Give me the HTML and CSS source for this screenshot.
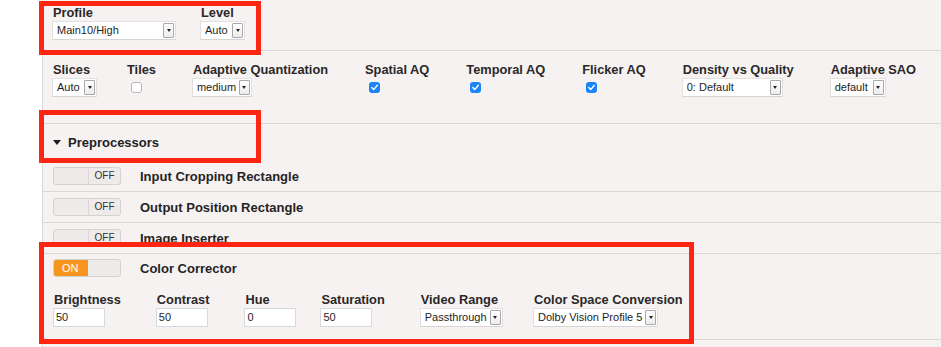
FILE: index.html
```html
<!DOCTYPE html>
<html>
<head>
<meta charset="utf-8">
<link rel="stylesheet" href="styles.css">
</head>
<body>
<div class="page">
  <div class="gutter"></div>
  <div class="panel">
    <section class="sect sect-top">
      <div class="fields">
        <div class="field">
          <div class="label">Profile</div>
          <div class="select w124"><span class="val">Main10/High</span><span class="btn"><i></i></span></div>
        </div>
        <div class="field">
          <div class="label">Level</div>
          <div class="select w45"><span class="val">Auto</span><span class="btn"><i></i></span></div>
        </div>
      </div>
    </section>

    <section class="sect sect-enc">
      <div class="fields">
        <div class="field">
          <div class="label">Slices</div>
          <div class="select w45"><span class="val">Auto</span><span class="btn"><i></i></span></div>
        </div>
        <div class="field">
          <div class="label">Tiles</div>
          <div class="ctl-check"><span class="cb"></span></div>
        </div>
        <div class="field">
          <div class="label">Adaptive Quantization</div>
          <div class="select w60"><span class="val">medium</span><span class="btn"><i></i></span></div>
        </div>
        <div class="field">
          <div class="label">Spatial AQ</div>
          <div class="ctl-check"><span class="cb on"><svg viewBox="0 0 11 11" width="11" height="11"><path d="M2.8 5.6 L4.7 7.6 L8.3 3.3" fill="none" stroke="#fff" stroke-width="1.4" stroke-linecap="round" stroke-linejoin="round"/></svg></span></div>
        </div>
        <div class="field">
          <div class="label">Temporal AQ</div>
          <div class="ctl-check"><span class="cb on"><svg viewBox="0 0 11 11" width="11" height="11"><path d="M2.8 5.6 L4.7 7.6 L8.3 3.3" fill="none" stroke="#fff" stroke-width="1.4" stroke-linecap="round" stroke-linejoin="round"/></svg></span></div>
        </div>
        <div class="field">
          <div class="label">Flicker AQ</div>
          <div class="ctl-check"><span class="cb on"><svg viewBox="0 0 11 11" width="11" height="11"><path d="M2.8 5.6 L4.7 7.6 L8.3 3.3" fill="none" stroke="#fff" stroke-width="1.4" stroke-linecap="round" stroke-linejoin="round"/></svg></span></div>
        </div>
        <div class="field">
          <div class="label">Density vs Quality</div>
          <div class="select w101"><span class="val">0: Default</span><span class="btn"><i></i></span></div>
        </div>
        <div class="field">
          <div class="label">Adaptive SAO</div>
          <div class="select w56"><span class="val">default</span><span class="btn"><i></i></span></div>
        </div>
      </div>
    </section>

    <div class="group-head"><span class="caret"></span>Preprocessors</div>

    <div class="row">
      <div class="toggle"><span class="t-left"></span><span class="t-right">OFF</span></div>
      <div class="row-title">Input Cropping Rectangle</div>
    </div>
    <div class="row">
      <div class="toggle"><span class="t-left"></span><span class="t-right">OFF</span></div>
      <div class="row-title">Output Position Rectangle</div>
    </div>
    <div class="row">
      <div class="toggle"><span class="t-left"></span><span class="t-right">OFF</span></div>
      <div class="row-title">Image Inserter</div>
    </div>

    <section class="cc">
      <div class="cc-head">
        <div class="toggle is-on"><span class="t-left">ON</span><span class="t-right"></span></div>
        <div class="row-title">Color Corrector</div>
      </div>
      <div class="fields cc-fields">
        <div class="field">
          <div class="label">Brightness</div>
          <div class="input">50</div>
        </div>
        <div class="field">
          <div class="label">Contrast</div>
          <div class="input">50</div>
        </div>
        <div class="field">
          <div class="label">Hue</div>
          <div class="input">0</div>
        </div>
        <div class="field">
          <div class="label">Saturation</div>
          <div class="input">50</div>
        </div>
        <div class="field">
          <div class="label">Video Range</div>
          <div class="select w83"><span class="val">Passthrough</span><span class="btn"><i></i></span></div>
        </div>
        <div class="field">
          <div class="label">Color Space Conversion</div>
          <div class="select w125"><span class="val">Dolby Vision Profile 5</span><span class="btn"><i></i></span></div>
        </div>
      </div>
    </section>
  </div>

  <div class="mark mark-1"></div>
  <div class="mark mark-2"></div>
  <div class="mark mark-3"></div>
</div>
</body>
</html>
```

FILE: styles.css
```css
* { box-sizing: border-box; }

html, body {
  margin: 0;
  padding: 0;
  background: #ffffff;
}

body {
  font-family: "Liberation Sans", Arial, sans-serif;
  color: #262424;
}

.page {
  position: relative;
  display: flex;
  width: 941px;
  height: 347px;
  overflow: hidden;
}

.gutter {
  width: 42px;
  flex: none;
  background: #ffffff;
}

.panel {
  flex: 1;
  background: #f6f2f2;
  border-left: 1px solid #dcd7d7;
}

.sect {
  border-bottom: 1px solid #dcd8d8;
  padding-left: 9px;
}

.sect-top {
  padding-top: 5px;
  padding-bottom: 10px;
}

.sect-enc {
  padding-top: 11px;
  padding-bottom: 26px;
}

.fields {
  display: flex;
  align-items: flex-start;
  gap: 24px;
}

.field {
  display: flex;
  flex-direction: column;
  align-items: flex-start;
}

.label {
  font-size: 12.8px;
  font-weight: bold;
  line-height: 16px;
  padding-left: 1px;
  padding-right: 11px;
  white-space: nowrap;
  color: #2a2828;
}

.sect-enc .label {
  padding-right: 12px;
}

.select {
  display: flex;
  align-items: center;
  height: 19px;
  background: #ffffff;
  border: 1px solid #e2e0e0;
  border-bottom-color: #d6d4d4;
}

.select .val {
  flex: 1;
  font-size: 11px;
  line-height: 17px;
  padding-left: 4px;
  white-space: nowrap;
  overflow: hidden;
  color: #1e1e1e;
}

.select .btn {
  flex: none;
  width: 11px;
  height: 15px;
  margin-right: 1px;
  border: 1px solid #a9a9a9;
  border-radius: 1px;
  background: linear-gradient(#ffffff, #ececec);
  display: flex;
  align-items: center;
  justify-content: center;
}

.select .btn i {
  display: block;
  width: 0;
  height: 0;
  border-left: 2.5px solid transparent;
  border-right: 2.5px solid transparent;
  border-top: 3px solid #222;
}

.w45 { width: 45px; }
.w56 { width: 56px; }
.w60 { width: 60px; }
.w83 { width: 83px; }
.w101 { width: 101px; }
.w124 { width: 124px; }
.w125 { width: 125px; }

.ctl-check {
  height: 19px;
  padding-top: 4px;
  padding-left: 5px;
}

.cb {
  display: block;
  width: 11px;
  height: 11px;
  border: 1px solid #b9b6b6;
  border-radius: 3px;
  background: #ffffff;
}

.cb.on {
  border: none;
  background: #1b84f8;
}

.cb svg { display: block; }

.group-head {
  height: 37px;
  line-height: 37px;
  padding-left: 10px;
  font-size: 13px;
  font-weight: bold;
  color: #222;
  display: flex;
  align-items: center;
}

.caret {
  display: inline-block;
  width: 0;
  height: 0;
  border-left: 4.5px solid transparent;
  border-right: 4.5px solid transparent;
  border-top: 5px solid #1e1e1e;
  margin-right: 7px;
}

.row {
  display: flex;
  align-items: center;
  gap: 19px;
  padding: 6px 10px 6px;
  border-bottom: 1px solid #dcd8d8;
}

.row-title {
  font-size: 13px;
  font-weight: bold;
  color: #262424;
  white-space: nowrap;
}

.toggle {
  display: flex;
  width: 68px;
  height: 18px;
  border: 1px solid #d6d2d2;
  border-radius: 3px;
  background: #efebeb;
  overflow: hidden;
}

.t-left {
  width: 34px;
  flex: none;
  font-size: 11px;
  line-height: 16px;
  padding-left: 8px;
  color: #ffffff;
}

.t-right {
  flex: 1;
  border-left: 1px solid #dbd7d7;
  font-size: 10px;
  line-height: 16px;
  text-align: center;
  color: #333;
}

.toggle.is-on .t-left {
  background: #f8951d;
}

.toggle.is-on .t-right {
  border-left: none;
}

.cc {
  padding: 5px 10px 12px;
  border-bottom: 1px solid #dcd8d8;
}

.cc-head {
  display: flex;
  align-items: center;
  gap: 19px;
}

.cc-fields {
  margin-top: 15px;
}

.input {
  width: 52px;
  height: 19px;
  background: #ffffff;
  border: 1px solid #d4dae0;
  font-size: 11px;
  line-height: 17px;
  padding-left: 2px;
  color: #1e1e1e;
}

.mark {
  position: absolute;
  border: 5px solid #fe2612;
  pointer-events: none;
}

.mark-1 { left: 39px; top: 1px; width: 222px; height: 54px; }
.mark-2 { left: 39px; top: 110px; width: 222px; height: 53px; }
.mark-3 { left: 39px; top: 242px; width: 655px; height: 102px; }
```
